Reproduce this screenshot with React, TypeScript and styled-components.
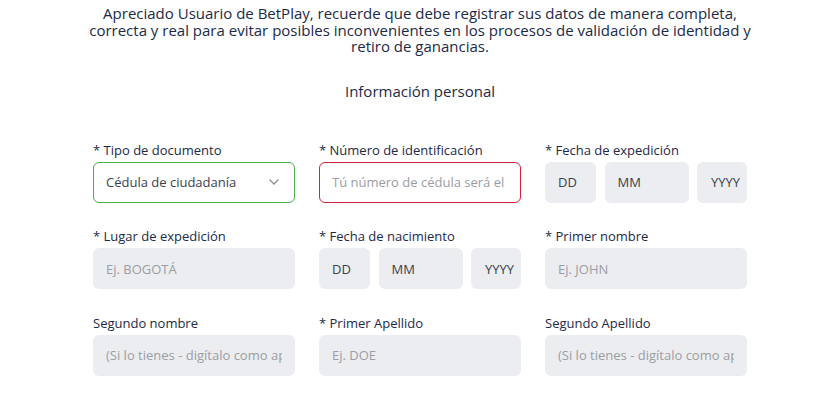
import styled, { createGlobalStyle } from "styled-components";

const GlobalStyle = createGlobalStyle`
  body {
    margin: 0;
    background: #ffffff;
    font-family: "Open Sans", "Noto Sans", sans-serif;
  }
  * {
    box-sizing: border-box;
  }
`;

const Page = styled.div`
  padding: 5px 0 0 16px;
  display: flex;
  flex-direction: column;
  align-items: center;
`;

const Notice = styled.p`
  margin: 0;
  width: 690px;
  text-align: center;
  font-size: 15px;
  line-height: 16.5px;
  color: #1c2a48;
`;

const SectionTitle = styled.h2`
  margin: 26px 0 0;
  font-size: 15px;
  font-weight: 400;
  color: #1c2a48;
  line-height: 20px;
`;

const Grid = styled.div`
  margin-top: 41px;
  display: grid;
  grid-template-columns: repeat(3, 202px);
  column-gap: 24px;
  row-gap: 25.5px;
`;

const Field = styled.div`
  display: flex;
  flex-direction: column;
`;

const Label = styled.label`
  font-size: 13px;
  line-height: 16px;
  color: #1c2a48;
  margin-bottom: 4px;
  white-space: nowrap;
`;

const Input = styled.input<{ $border?: string }>`
  width: 100%;
  height: 41px;
  border-radius: 6px;
  background: ${(p) => (p.$border ? "#ffffff" : "#ecedf1")};
  border: ${(p) => (p.$border ? `1px solid ${p.$border}` : "none")};
  padding: 0 ${(p) => (p.$border ? "12px" : "13px")};
  font-family: inherit;
  font-size: 13px;
  color: #3a3f4e;
  outline: none;
  &::placeholder {
    color: #9b9da3;
  }
`;

const Select = styled.div`
  height: 41px;
  border-radius: 6px;
  border: 1px solid #4caf50;
  background: #ffffff;
  display: flex;
  align-items: center;
  justify-content: space-between;
  padding: 0 14px 0 12px;
  font-size: 13px;
  color: #3a3f4e;
`;

const DateRow = styled.div`
  display: grid;
  grid-template-columns: 51px 84px 50px;
  column-gap: 8.5px;
`;

const DatePart = styled.input<{ $align: "left" | "right" }>`
  width: 100%;
  height: 41px;
  border-radius: 6px;
  border: none;
  background: #ecedf1;
  text-align: ${(p) => p.$align};
  padding: ${(p) => (p.$align === "right" ? "0 7px 0 4px" : "0 8px 0 13px")};
  font-family: inherit;
  font-size: 13px;
  outline: none;
  &::placeholder {
    color: #3a3f4e;
  }
`;

const Chevron = () => (
  <svg width="12" height="8" viewBox="0 0 12 8">
    <path d="M1.5 1.5 L6 6 L10.5 1.5" fill="none" stroke="#8b8e95" strokeWidth="1.3" />
  </svg>
);

const DateInput = () => (
  <DateRow>
    <DatePart $align="left" placeholder="DD" />
    <DatePart $align="left" placeholder="MM" />
    <DatePart $align="right" placeholder="YYYY" />
  </DateRow>
);

const App = () => (
  <>
    <GlobalStyle />
    <Page>
      <Notice>
        Apreciado Usuario de BetPlay, recuerde que debe registrar sus datos de manera completa,
        correcta y real para evitar posibles inconvenientes en los procesos de validación de
        identidad y retiro de ganancias.
      </Notice>
      <SectionTitle>Información personal</SectionTitle>
      <Grid>
        <Field>
          <Label>* Tipo de documento</Label>
          <Select>
            <span>Cédula de ciudadanía</span>
            <Chevron />
          </Select>
        </Field>
        <Field>
          <Label>* Número de identificación</Label>
          <Input $border="#d3243b" placeholder="Tú número de cédula será el usuario" />
        </Field>
        <Field>
          <Label>* Fecha de expedición</Label>
          <DateInput />
        </Field>
        <Field>
          <Label>* Lugar de expedición</Label>
          <Input placeholder="Ej. BOGOTÁ" />
        </Field>
        <Field>
          <Label>* Fecha de nacimiento</Label>
          <DateInput />
        </Field>
        <Field>
          <Label>* Primer nombre</Label>
          <Input placeholder="Ej. JOHN" />
        </Field>
        <Field>
          <Label>Segundo nombre</Label>
          <Input placeholder="(Si lo tienes - digítalo como aparece)" />
        </Field>
        <Field>
          <Label>* Primer Apellido</Label>
          <Input placeholder="Ej. DOE" />
        </Field>
        <Field>
          <Label>Segundo Apellido</Label>
          <Input placeholder="(Si lo tienes - digítalo como aparece)" />
        </Field>
      </Grid>
    </Page>
  </>
);

export default App;
